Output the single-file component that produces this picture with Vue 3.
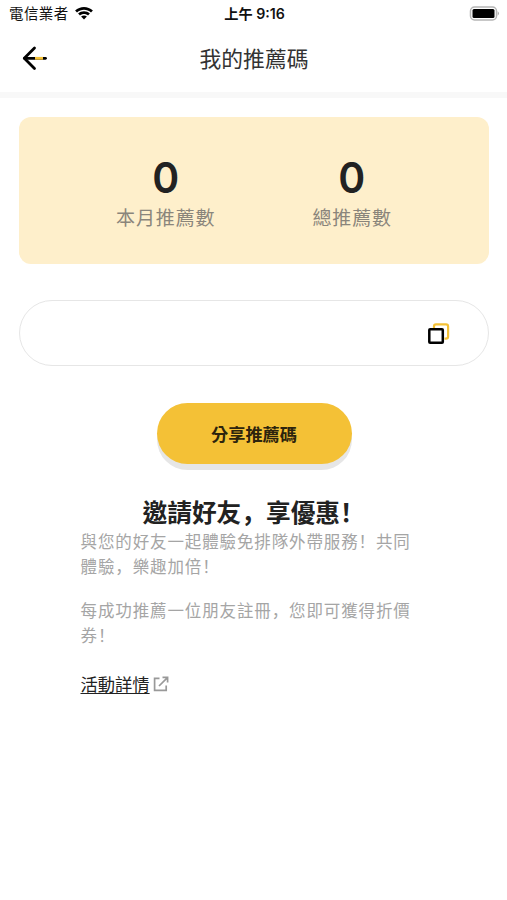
<script setup>
const stats = [
  { value: 0, label: '本月推薦數' },
  { value: 0, label: '總推薦數' },
]
const paragraphs = [
  ['與您的好友一起體驗免排隊外帶服務！共同', '體驗，樂趣加倍！'],
  ['每成功推薦一位朋友註冊，您即可獲得折價', '券！'],
]
const heading = '邀請好友，享優惠！'

// Splits text so that full-width punctuation can be set left-aligned in its cell.
const split = (text) => text.split(/([，！])/).filter(Boolean)
const isMark = (part) => part === '，' || part === '！'
</script>

<template>
  <div class="screen" lang="zh-Hant">
    <div class="status">
      <div class="carrier">
        <span>電信業者</span>
        <svg class="wifi" viewBox="0 0 18 14" width="18" height="14">
          <path d="M0.1 4.6C5 -.2 13 -.2 17.9 4.6L16 6.5C12 2.9 6 2.9 2 6.5Z" />
          <path d="M3.1 7.6C6.4 4.6 11.6 4.6 14.9 7.6L13 9.5C10.7 7.5 7.3 7.5 5 9.5Z" />
          <path d="M6.1 10.6C7.8 9.1 10.2 9.1 11.9 10.6L9 13.6Z" />
        </svg>
      </div>
      <div class="time">上午 9:16</div>
      <svg class="battery" viewBox="0 0 31 15" width="31" height="15">
        <rect x="1.5" y="1" width="26" height="13" rx="4" fill="#fff" stroke="#b5b5b5" stroke-width="1.5" />
        <rect x="3.5" y="3" width="22" height="9" rx="1.5" fill="#000" />
        <path d="M28.7 5.3Q31.2 7.5 28.7 9.7Z" fill="#aaa" />
      </svg>
    </div>

    <header class="nav">
      <svg class="back" viewBox="0 0 26 26" width="26" height="26" fill="none" stroke-linecap="round" stroke-linejoin="round">
        <path d="M2.5 13.3H23.5" stroke="#000" stroke-width="2.8" />
        <path d="M13 13.3H21" stroke="#f4c136" stroke-width="2.8" stroke-linecap="butt" />
        <path d="M12.5 3L2.3 13.3L12.5 23.5" stroke="#000" stroke-width="2.8" />
      </svg>
      <h1>我的推薦碼</h1>
    </header>

    <main>
      <section class="stats">
        <div v-for="s in stats" :key="s.label" class="stat">
          <div class="value">{{ s.value }}</div>
          <div class="label">{{ s.label }}</div>
        </div>
      </section>

      <div class="code">
        <svg viewBox="0 0 24 24" width="24" height="24" fill="none" stroke-linejoin="round">
          <path d="M7 6V4.3Q7 2.4 9 2.4H19Q21.1 2.4 21.1 4.5V14.5Q21.1 16.6 19 16.6H17.5" stroke="#f4c136" stroke-width="2.2" />
          <rect x="2.3" y="7.2" width="13.5" height="13.6" rx=".8" stroke="#000" stroke-width="2.5" />
        </svg>
      </div>

      <button class="share" type="button">分享推薦碼</button>

      <section class="invite">
        <h2><span v-for="(p, i) in split(heading)" :key="i" :class="{ mark: isMark(p) }" :lang="isMark(p) ? 'zh-Hans' : 'zh-Hant'">{{ p }}</span></h2>
        <p v-for="(lines, n) in paragraphs" :key="n">
          <span v-for="line in lines" :key="line" class="line"><span v-for="(p, i) in split(line)" :key="i" :class="{ mark: isMark(p) }" :lang="isMark(p) ? 'zh-Hans' : 'zh-Hant'">{{ p }}</span></span>
        </p>
        <a class="details">
          <span>活動詳情</span>
          <svg viewBox="0 0 16 16" width="16" height="16" fill="none" stroke="#999" stroke-width="1.7">
            <path d="M6.5 2.4H1.6V14.4H13.2V9.5" />
            <path d="M9.5 1.4H14.6V6.5M14.2 1.8L6 10" />
          </svg>
        </a>
      </section>
    </main>
  </div>
</template>

<style>
body { background: #fff; }
</style>

<style scoped>
.screen {
  box-sizing: border-box;
  width: 507px;
  height: 900px;
  overflow: hidden;
  background: #fff;
  color: #222;
  font-family: "Noto Sans CJK TC", sans-serif;
}
h1, h2, p { margin: 0; font-weight: 400; }
svg { display: block; flex: none; }
.mark { font-family: "Noto Sans CJK SC", sans-serif; }
.status {
  display: grid;
  grid-template-columns: 1fr auto 1fr;
  align-items: center;
  height: 27px;
  padding: 0 7px 0 9px;
  color: #111;
}
.carrier { display: flex; align-items: center; gap: 6px; padding-bottom: 2px; font-size: 14.5px; letter-spacing: .4px; line-height: 25px; }
.wifi { fill: #000; }
.time { font-family: Inter, "Noto Sans CJK TC", sans-serif; font-size: 14.2px; font-weight: 600; line-height: 27px; }
.battery { justify-self: end; }
.nav {
  display: grid;
  grid-template-columns: 26px 1fr 26px;
  align-items: center;
  height: 65px;
  padding: 0 21px 0 22px;
  border-bottom: 6px solid #f8f8f8;
}
.nav h1 { margin-bottom: 3px; font-size: 21.8px; line-height: 32px; text-align: center; color: #333; }
.back { margin-bottom: 3px; }
main { display: flex; flex-direction: column; align-items: center; padding: 19px 18px 0 19px; }
.stats {
  box-sizing: border-box;
  display: flex;
  justify-content: space-evenly;
  width: 100%;
  height: 147px;
  padding-top: 36px;
  border-radius: 12px;
  background: #feefcb;
}
.stat { text-align: center; }
.value {
  height: 48px;
  font-family: Inter, sans-serif;
  font-size: 43px;
  line-height: 48px;
  font-weight: 600;
  color: #222;
  transform: scaleX(.95);
}
.label { font-size: 19px; letter-spacing: .85px; line-height: 32px; color: #8a857b; }
.code {
  box-sizing: border-box;
  display: flex;
  align-items: center;
  justify-content: flex-end;
  width: 100%;
  height: 66px;
  margin-top: 36px;
  padding: 1px 37px 0 0;
  border: 1.5px solid #e6e6e6;
  border-radius: 33px;
}
.share {
  width: 195px;
  height: 61px;
  margin-top: 37px;
  padding: 0;
  border: 0;
  border-radius: 31px;
  background: #f4c136;
  box-shadow: 0 6px 0 #e6e6e6;
  font: 700 17.2px/61px "Noto Sans CJK TC", sans-serif;
  color: #2d240d;
}
.invite { width: 347px; margin-top: 29px; }
.invite h2 { padding-left: 62px; font-size: 24.7px; font-weight: 700; line-height: 36px; color: #222; white-space: nowrap; }
.invite p { font-size: 16.5px; letter-spacing: .88px; line-height: 24.6px; color: #a5a5a5; }
.line { display: block; white-space: nowrap; }
.invite p + p { margin-top: 20px; }
.details { display: flex; align-items: center; gap: 3px; margin-top: 24px; font-size: 17.3px; line-height: 26px; color: #222; }
.details span { text-decoration: underline; text-decoration-thickness: 1px; text-underline-offset: 2px; }
</style>
